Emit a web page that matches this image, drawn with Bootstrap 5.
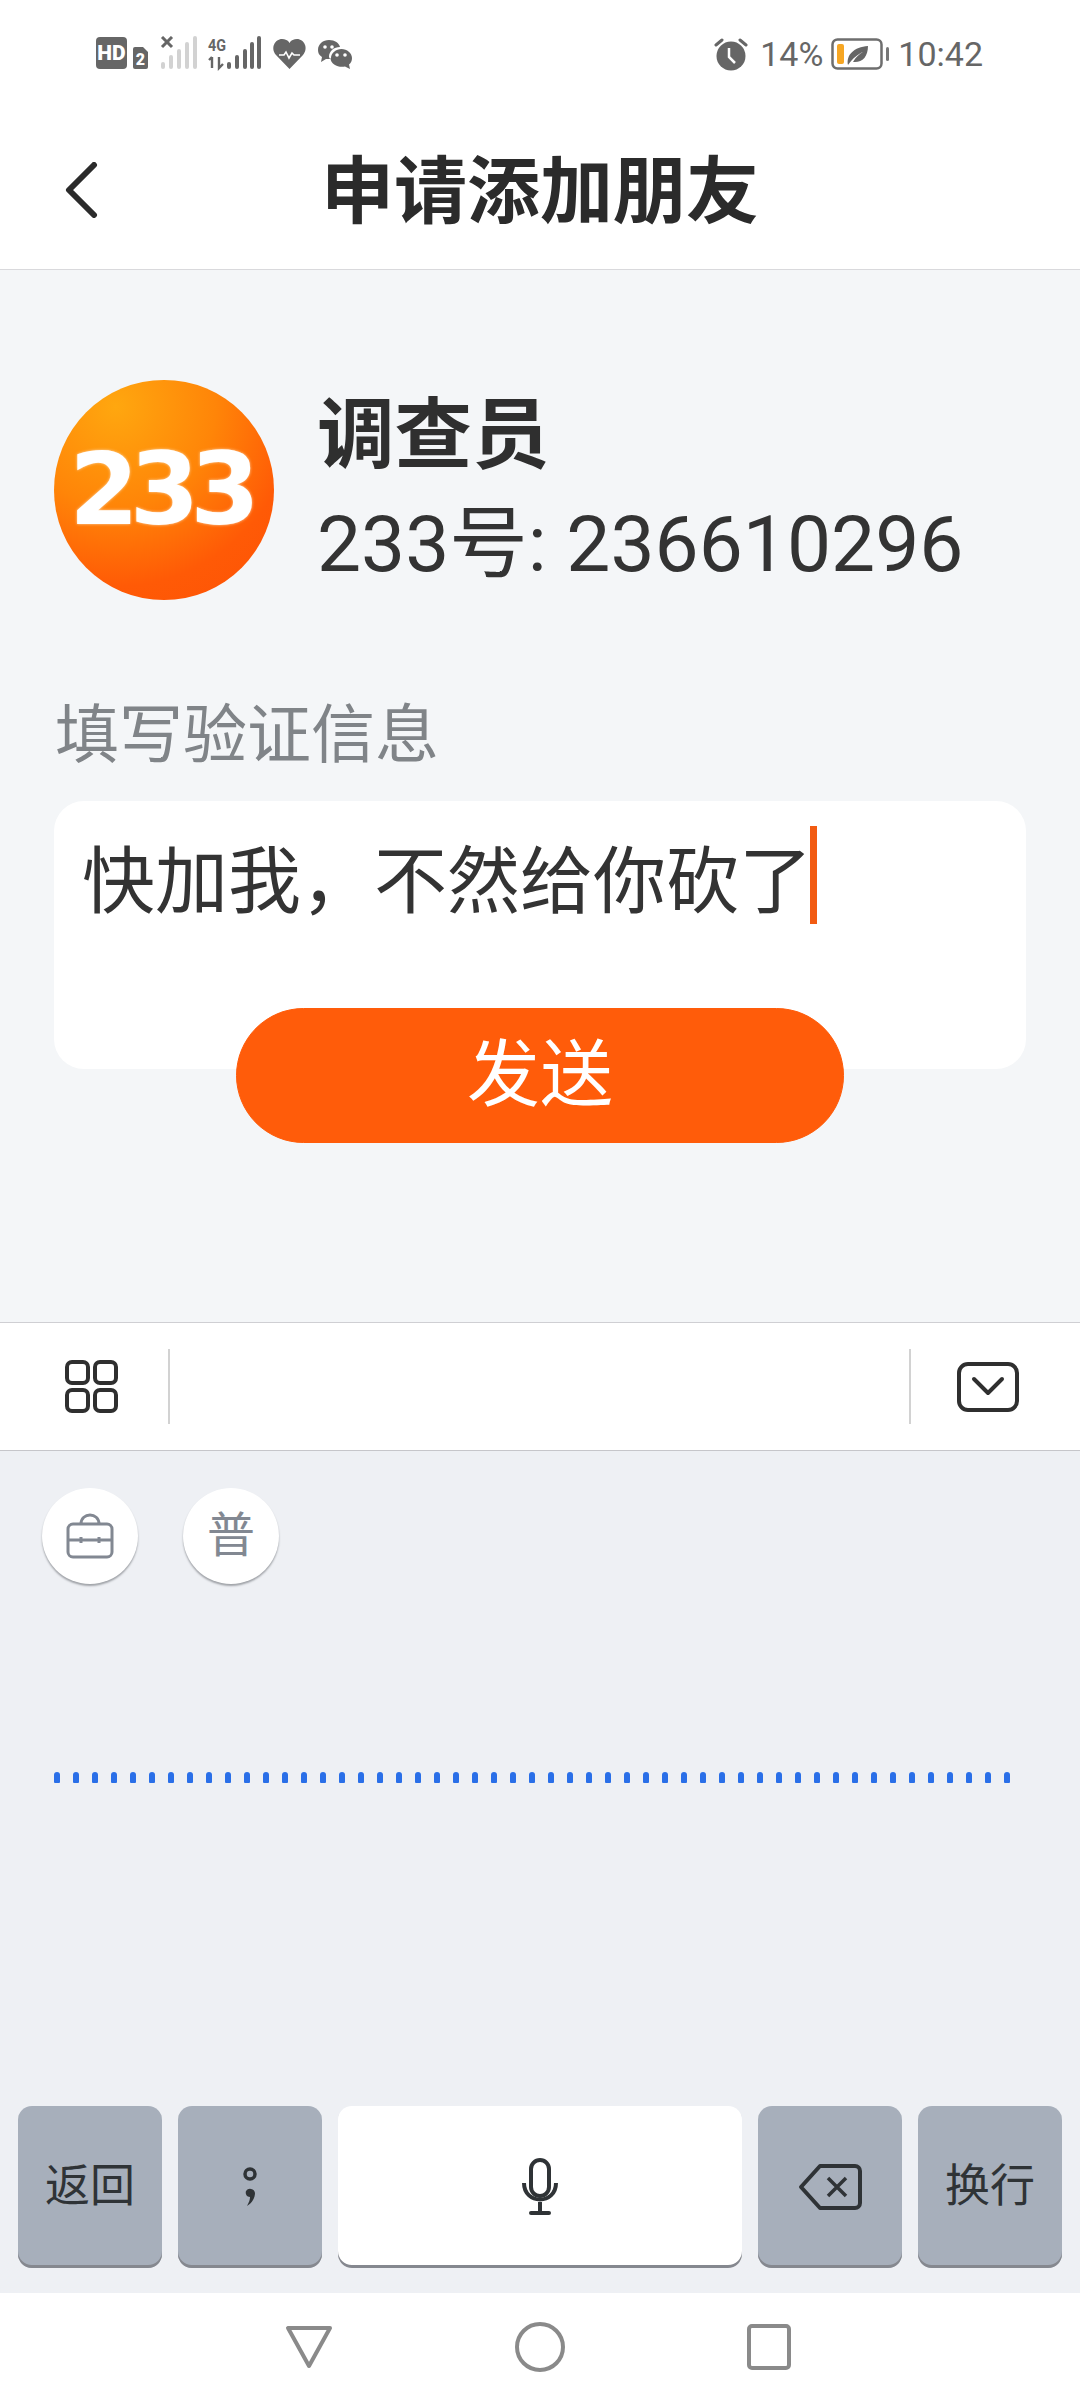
<!DOCTYPE html>
<html lang="zh">
<head>
  <meta charset="UTF-8">
  <title>申请添加朋友</title>
  <link href="https://cdn.jsdelivr.net/npm/bootstrap@5.3.3/dist/css/bootstrap.min.css" rel="stylesheet">
  <style>
    body { font-family: Roboto, "Noto Sans CJK SC", sans-serif; color: #333; background: #fff; width: 1080px; height: 2400px; overflow: hidden; }
    .status-row { height: 90px; padding: 36px 97px 0 96px; color: #666; }
    .status-txt { font-size: 34px; line-height: 36px; }
    .time-gap { margin-left: 9px; }
    .top-head { height: 180px; border-bottom: 1px solid #d9d9dc; padding-left: 64px; padding-top: 20px; }
    .top-title { font-size: 73px; font-weight: 700; line-height: 90px; color: #2b2b2b; left: 0; right: 0; top: 57px; }
    .main-area { height: 1052px; background: #f4f6f8; padding: 110px 54px 0; }
    .avatar-disc { width: 220px; height: 220px; background: radial-gradient(circle at 28% 12%, #ffa70f 0%, #ff8508 40%, #ff5a06 72%, #fd5205 100%); color: #fff; }
    .avatar-num { font-family: "DejaVu Sans", sans-serif; font-size: 100px; font-weight: 700; letter-spacing: -9px; line-height: 1; margin-left: -8px; text-shadow: 0 0 3px #ffd9b0; }
    .prof-name { font-size: 77.5px; font-weight: 700; line-height: 100px; color: #2f2f2f; margin-top: 6px; }
    .prof-id { font-size: 78.5px; line-height: 100px; color: #333; margin-top: 8px; }
    .prof-text { margin-left: 43px; }
    .field-label { font-size: 64px; line-height: 80px; color: #808488; margin: 96px 0 25px 1px; }
    .msg-box { height: 268px; background: #fff; border-radius: 30px; padding: 31px 28px; font-size: 73px; line-height: 100px; }
    .caret-bar { width: 7px; height: 98px; background: #f25b12; margin: -6px 0 0 -2px; }
    .send-btn { width: 608px; height: 135px; margin-top: -61px; background: #ff5c0a; border-color: #ff5c0a; color: #fff; font-size: 73px; line-height: 1; }
    .tool-row { height: 129px; border-top: 1px solid #cfcfd3; border-bottom: 1px solid #c6c6ca; background: #fff; }
    .tool-cell { width: 168px; padding-left: 65px; }
    .tool-sep { width: 2px; height: 75px; background: #d2d2d2; }
    .tool-env { margin: 0 61px 0 46px; flex: none; }
    .kbd-area { height: 842px; background: #eef0f4; }
    .pill-round { width: 96px; height: 96px; background: #fff; box-shadow: 0 2px 2px #a0a3a8; color: #828892; font-size: 48px; }
    .pills { padding: 37px 0 0 42px; gap: 45px; }
    .dot-line { margin: 188px 70px 0 54px; height: 11px; }
    .dot-line span { width: 6px; height: 11px; background: #2a6fe8; border-radius: 3px 3px 1px 1px; }
    .key-row { padding: 323px 18px 0 18px; gap: 16px; }
    .kb-key { width: 144px; height: 162px; background: #a7afbb; border-radius: 14px; box-shadow: inset 0 -3px 0 #85888f; font-size: 45px; color: #2f3336; }
    .kb-space { width: 404px; background: #fff; }
    .nav-foot { height: 107px; background: #fff; padding-left: 285px; gap: 182px; }
    .nav-foot svg { flex: none; }
  </style>
</head>
<body>

  <div class="status-row d-flex justify-content-between align-items-start">
    <svg width="256" height="44" viewBox="96 37 256 44">
      <rect x="96" y="38" width="31" height="32" rx="4" fill="#666"/>
      <text x="111.5" y="61" text-anchor="middle" font-family="Roboto" font-weight="900" font-size="21" fill="#fff">HD</text>
      <path d="M133 50a2 2 0 0 1 2-2h8l5 5v15a2 2 0 0 1-2 2h-11a2 2 0 0 1-2-2z" fill="#666"/>
      <text x="140.5" y="66" text-anchor="middle" font-family="Roboto" font-weight="900" font-size="16" fill="#fff">2</text>
      <path d="M162 38l10 10M172 38l-10 10" stroke="#666" stroke-width="3"/>
      <g fill="#d2d2d2">
        <rect x="161" y="63" width="4" height="7" rx="2"/><rect x="169" y="56" width="4" height="14" rx="2"/><rect x="177" y="50" width="4" height="20" rx="2"/><rect x="185" y="43" width="4" height="27" rx="2"/><rect x="193" y="37" width="4" height="33" rx="2"/>
      </g>
      <text x="217" y="52" text-anchor="middle" font-family="Roboto" font-weight="700" font-size="17" fill="#666" textLength="18" lengthAdjust="spacingAndGlyphs">4G</text>
      <path d="M212 58v11M209 61l3-3M219 58v11l4-4" stroke="#666" stroke-width="2.4" fill="none"/>
      <g fill="#666">
        <rect x="227" y="63" width="4" height="7" rx="2"/><rect x="235" y="56" width="4" height="14" rx="2"/><rect x="243" y="50" width="4" height="20" rx="2"/><rect x="250" y="43" width="4" height="27" rx="2"/><rect x="257" y="37" width="4" height="33" rx="2"/>
      </g>
      <path d="M289.500 70L276 56c-6-7-1-16 6-16 3 0 6 1 7.500 4 1.500-3 4.500-4 7.500-4 7 0 12 9 6 16z" fill="#666"/>
      <path d="M279 56h5l2-3 3 6 3-5 2 2h6" fill="none" stroke="#fff" stroke-width="1.600"/>
      <path d="M318 51c0-6 5-10 11-10 6 0 10 3 11 7-6 0-11 4-11 10l1 2h-4l-5 3 1-5c-3-2-4-4-4-7z" fill="#666"/>
      <circle cx="325" cy="48" r="1.800" fill="#fff"/><circle cx="332" cy="48" r="1.800" fill="#fff"/>
      <path d="M331 59c0-5 5-9 10.500-9s10.500 4 10.500 9c0 3-1 5-3 6.500l1 4.500-5-2.500c-6 1.500-14.500-2-14.500-8.500z" fill="#666"/>
      <circle cx="337" cy="56" r="1.800" fill="#fff"/><circle cx="345" cy="56" r="1.800" fill="#fff"/>
    </svg>
    <div class="d-flex align-items-center">
      <svg width="34" height="34" viewBox="0 0 34 34" class="me-2">
        <circle cx="17" cy="19" r="14.500" fill="#666"/>
        <path d="M2 8l6-5M32 8l-6-5" stroke="#666" stroke-width="3" stroke-linecap="round"/>
        <path d="M15 11v9l6 6" stroke="#fff" stroke-width="2.500" fill="none"/>
      </svg>
      <span class="status-txt ms-1">14%</span>
      <svg width="58" height="32" viewBox="0 0 58 32" class="ms-2">
        <rect x="1.500" y="1.500" width="49" height="29" rx="5" fill="#fff" stroke="#6e6e6e" stroke-width="2.500"/>
        <rect x="6" y="6" width="7" height="20" rx="2" fill="#f6a623"/>
        <path d="M17 27c-2-10 6-18 20-19 0 11-6 17-15 16 3-5 6-8 10-10-5 2-10 6-15 13z" fill="#666"/>
        <rect x="55" y="9" width="3" height="14" rx="1.500" fill="#777"/>
      </svg>
      <span class="status-txt time-gap">10:42</span>
    </div>
  </div>

  <div class="top-head position-relative d-flex align-items-center">
    <svg width="34" height="56" viewBox="0 0 34 56">
      <path d="M30 3L5 28l25 25" fill="none" stroke="#2b2b2b" stroke-width="6" stroke-linecap="round" stroke-linejoin="round"/>
    </svg>
    <div class="top-title position-absolute text-center">申请添加朋友</div>
  </div>

  <div class="main-area">
    <div class="d-flex">
      <div class="avatar-disc rounded-circle d-flex align-items-center justify-content-center flex-shrink-0">
        <span class="avatar-num">233</span>
      </div>
      <div class="prof-text">
        <div class="prof-name">调查员</div>
        <div class="prof-id text-nowrap">233号: 236610296</div>
      </div>
    </div>
    <div class="field-label">填写验证信息</div>
    <div class="msg-box d-flex align-items-start">
      <span>快加我，不然给你砍了</span><span class="caret-bar"></span>
    </div>
    <div class="d-flex justify-content-center position-relative">
      <button class="btn send-btn rounded-pill d-flex align-items-center justify-content-center">发送</button>
    </div>
  </div>

  <div class="tool-row d-flex align-items-center">
    <div class="tool-cell flex-shrink-0 d-flex">
      <svg width="53" height="53" viewBox="0 0 53 53">
        <g fill="none" stroke="#2f2f2f" stroke-width="4">
          <rect x="2" y="2" width="21" height="21" rx="5"/><rect x="30" y="2" width="21" height="21" rx="5"/>
          <rect x="2" y="30" width="21" height="21" rx="5"/><rect x="30" y="30" width="21" height="21" rx="5"/>
        </g>
      </svg>
    </div>
    <div class="tool-sep"></div>
    <div class="flex-grow-1"></div>
    <div class="tool-sep"></div>
    <svg width="62" height="50" viewBox="0 0 62 50" class="tool-env">
      <rect x="2" y="2" width="58" height="46" rx="9" fill="none" stroke="#2f2f2f" stroke-width="4"/>
      <path d="M17 17l14 14 14-14" fill="none" stroke="#2f2f2f" stroke-width="4" stroke-linecap="round" stroke-linejoin="round"/>
    </svg>
  </div>

  <div class="kbd-area">
    <div class="pills d-flex">
      <div class="pill-round rounded-circle d-flex align-items-center justify-content-center">
        <svg width="48" height="46" viewBox="0 0 48 46">
          <g fill="none" stroke="#828892" stroke-width="3">
            <rect x="2" y="11" width="44" height="33" rx="5"/>
            <path d="M15 11c0-12 18-12 18 0M2 27h44"/>
          </g>
          <path d="M15 24v6M33 24v6" stroke="#828892" stroke-width="3"/>
        </svg>
      </div>
      <div class="pill-round rounded-circle d-flex align-items-center justify-content-center">普</div>
    </div>
    <div class="dot-line d-flex justify-content-between" id="dotLine"></div>
    <div class="key-row d-flex">
      <div class="kb-key d-flex align-items-center justify-content-center">返回</div>
      <div class="kb-key d-flex align-items-center justify-content-center">
        <svg width="16" height="40" viewBox="0 0 16 40">
          <circle cx="8" cy="7" r="5" fill="none" stroke="#2f3336" stroke-width="3.500"/>
          <path d="M4 24a5 5 0 0 1 9 2c0 5-3 10-8 13 2-4 3-6 3-9-3 0-5-3-4-6z" fill="#2f3336"/>
        </svg>
      </div>
      <div class="kb-key kb-space d-flex align-items-center justify-content-center">
        <svg width="36" height="58" viewBox="0 0 36 58">
          <g fill="none" stroke="#2f3336" stroke-width="4">
            <rect x="9" y="2" width="18" height="36" rx="9"/>
            <path d="M2 25c0 22 32 22 32 0M18 44v11"/>
            <path d="M9 55h18" stroke-linecap="round"/>
          </g>
        </svg>
      </div>
      <div class="kb-key d-flex align-items-center justify-content-center">
        <svg width="66" height="48" viewBox="0 0 64 48">
          <path d="M22 3h35a5 5 0 0 1 5 5v32a5 5 0 0 1-5 5H22L3 24z" fill="none" stroke="#2f3336" stroke-width="4" stroke-linejoin="round"/>
          <path d="M30 15l18 18M48 15L30 33" stroke="#2f3336" stroke-width="3.500"/>
        </svg>
      </div>
      <div class="kb-key d-flex align-items-center justify-content-center">换行</div>
    </div>
  </div>

  <div class="nav-foot d-flex align-items-center">
    <svg width="48" height="44" viewBox="0 0 48 44">
      <path d="M3 3h42L24 41z" fill="none" stroke="#8a8a8a" stroke-width="4" stroke-linejoin="round"/>
    </svg>
    <svg width="50" height="50" viewBox="0 0 50 50">
      <circle cx="25" cy="25" r="23" fill="none" stroke="#8a8a8a" stroke-width="4"/>
    </svg>
    <svg width="44" height="46" viewBox="0 0 44 46">
      <rect x="2" y="2" width="40" height="42" rx="3" fill="none" stroke="#8a8a8a" stroke-width="4"/>
    </svg>
  </div>

  <script src="https://cdn.jsdelivr.net/npm/bootstrap@5.3.3/dist/js/bootstrap.bundle.min.js"></script>
  <script>
    // dotted progress line above the keys
    var dotLine = document.getElementById("dotLine");
    for (var i = 0; i < 51; i++) {
      dotLine.appendChild(document.createElement("span"));
    }
  </script>
</body>
</html>
